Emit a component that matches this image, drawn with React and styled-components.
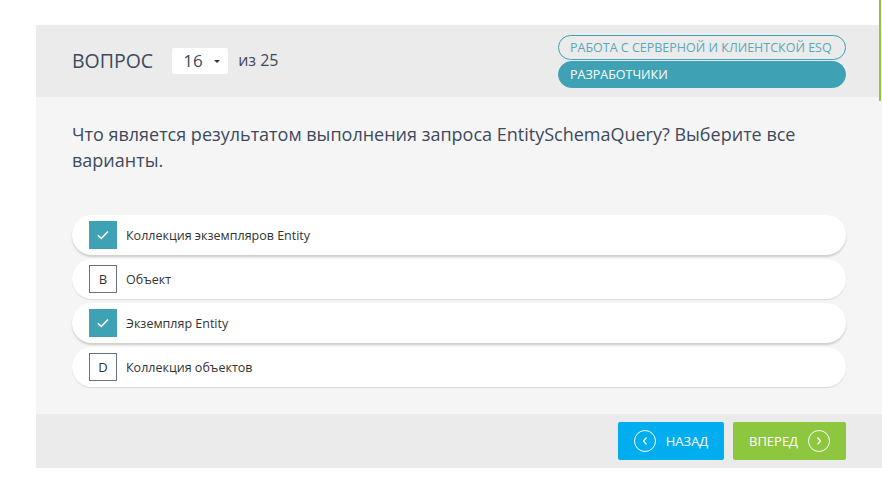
import React from "react";
import styled, { createGlobalStyle } from "styled-components";

const Global = createGlobalStyle`
  html, body { margin: 0; padding: 0; background: #fff; }
  body { font-family: "Open Sans", "Noto Sans", sans-serif; }
`;

const Page = styled.div`
  position: relative;
  width: 882px;
  height: 496px;
  padding: 25px 0 0 36px;
  box-sizing: border-box;
  overflow: hidden;
`;

const ScrollMark = styled.div`
  position: absolute;
  right: 1px;
  top: 0;
  width: 2px;
  height: 101px;
  background: #8dc63f;
`;

const Card = styled.div`
  width: 846px;
  display: flex;
  flex-direction: column;
`;

const Header = styled.div`
  height: 72px;
  background: #ebebeb;
  display: flex;
  align-items: flex-start;
  justify-content: space-between;
  padding: 0 36px 0 36px;
  box-sizing: border-box;
`;

const QNav = styled.div`
  display: flex;
  align-items: center;
  height: 72px;
  color: #3e4a5c;
`;

const QLabel = styled.span`
  font-size: 19.5px;
  margin-right: 19px;
  margin-top: -1px;
`;

const Select = styled.div`
  width: 56px;
  height: 26px;
  background: #fff;
  border-radius: 2px;
  display: flex;
  align-items: center;
  padding-left: 11px;
  box-sizing: border-box;
  font-size: 17px;
  color: #3e4a5c;
  position: relative;
  margin-top: -1px;
`;

const Caret = styled.span`
  position: absolute;
  right: 8px;
  top: 12px;
  width: 0;
  height: 0;
  border-left: 3px solid transparent;
  border-right: 3px solid transparent;
  border-top: 3px solid #333;
`;

const Of = styled.span`
  font-size: 16px;
  margin-left: 10px;
  margin-top: -2px;
`;

const Tags = styled.div`
  display: flex;
  flex-direction: column;
  gap: 1px;
  margin-top: 10px;
  width: 288px;
`;

const Tag = styled.div`
  height: ${(p) => (p.$filled ? 27 : 25)}px;
  border-radius: 14px;
  box-sizing: border-box;
  border: 1px solid #3ea2b4;
  background: ${(p) => (p.$filled ? "#3ea2b4" : "transparent")};
  color: ${(p) => (p.$filled ? "#fff" : "#5aa8b8")};
  font-size: 12.5px;
  display: flex;
  align-items: center;
  padding-left: 11px;
  white-space: nowrap;
`;

const Body = styled.div`
  background: #f5f5f5;
  height: 317px;
  padding: 24px 36px 0 36px;
  box-sizing: border-box;
`;

const Question = styled.div`
  font-size: 18px;
  line-height: 26px;
  color: #3e4a5c;
  margin-bottom: 42px;
  padding-right: 30px;
`;

const Options = styled.div`
  display: flex;
  flex-direction: column;
  gap: 4px;
`;

const Option = styled.div`
  height: 40px;
  background: #fff;
  border-radius: 20px;
  box-shadow: ${(p) =>
    p.$checked
      ? "0 2px 2px rgba(0,0,0,0.16)"
      : "0 1px 1px rgba(0,0,0,0.12)"};
  display: flex;
  align-items: center;
  padding-left: 17px;
  box-sizing: border-box;
`;

const Box = styled.div`
  width: 28px;
  height: 28px;
  box-sizing: border-box;
  margin-right: 9px;
  display: flex;
  align-items: center;
  justify-content: center;
  background: ${(p) => (p.$checked ? "#3ea2b4" : "#fff")};
  border: ${(p) => (p.$checked ? "none" : "1px solid #6b7080")};
  color: #333;
  font-size: 13px;
`;

const OptText = styled.span`
  font-size: 12.5px;
  color: #333;
`;

const Footer = styled.div`
  height: 54px;
  background: #ebebeb;
  display: flex;
  justify-content: flex-end;
  align-items: center;
  gap: 9px;
  padding-right: 36px;
`;

const NavButton = styled.button`
  height: 38px;
  width: ${(p) => p.$w}px;
  border: none;
  border-radius: 2px;
  background: ${(p) => p.$bg};
  color: #fff;
  font-family: "Open Sans", sans-serif;
  font-weight: 400;
  font-size: 13px;
  display: flex;
  align-items: center;
  justify-content: center;
  gap: 10px;
  padding: 0;
`;

const Circle = styled.span`
  width: 20px;
  height: 20px;
  border: 1px solid #fff;
  border-radius: 50%;
  display: flex;
  align-items: center;
  justify-content: center;
`;

const Check = () => (
  <svg width="16" height="16" viewBox="0 0 16 16">
    <path d="M2.8 8.2 L6.3 11.4 L13 4.4" fill="none" stroke="#fff" strokeWidth="1.5" />
  </svg>
);

const Chevron = ({ dir }) => (
  <svg width="8" height="10" viewBox="0 0 8 10">
    <path
      d={dir === "left" ? "M5.5 1.5 L2.5 5 L5.5 8.5" : "M2.5 1.5 L5.5 5 L2.5 8.5"}
      fill="none"
      stroke="#fff"
      strokeWidth="1.2"
    />
  </svg>
);

const options = [
  { key: "A", text: "Коллекция экземпляров Entity", checked: true },
  { key: "B", text: "Объект", checked: false },
  { key: "C", text: "Экземпляр Entity", checked: true },
  { key: "D", text: "Коллекция объектов", checked: false },
];

export default function App() {
  return (
    <Page>
      <Global />
      <ScrollMark />
      <Card>
        <Header>
          <QNav>
            <QLabel>ВОПРОС</QLabel>
            <Select>
              16
              <Caret />
            </Select>
            <Of>из 25</Of>
          </QNav>
          <Tags>
            <Tag>РАБОТА С СЕРВЕРНОЙ И КЛИЕНТСКОЙ ESQ</Tag>
            <Tag $filled>РАЗРАБОТЧИКИ</Tag>
          </Tags>
        </Header>
        <Body>
          <Question>
            Что является результатом выполнения запроса EntitySchemaQuery? Выберите все варианты.
          </Question>
          <Options>
            {options.map((o) => (
              <Option key={o.key} $checked={o.checked}>
                <Box $checked={o.checked}>{o.checked ? <Check /> : o.key}</Box>
                <OptText>{o.text}</OptText>
              </Option>
            ))}
          </Options>
        </Body>
        <Footer>
          <NavButton $bg="#00aeef" $w={106}>
            <Circle>
              <Chevron dir="left" />
            </Circle>
            НАЗАД
          </NavButton>
          <NavButton $bg="#8dc63f" $w={113}>
            ВПЕРЕД
            <Circle>
              <Chevron dir="right" />
            </Circle>
          </NavButton>
        </Footer>
      </Card>
    </Page>
  );
}
